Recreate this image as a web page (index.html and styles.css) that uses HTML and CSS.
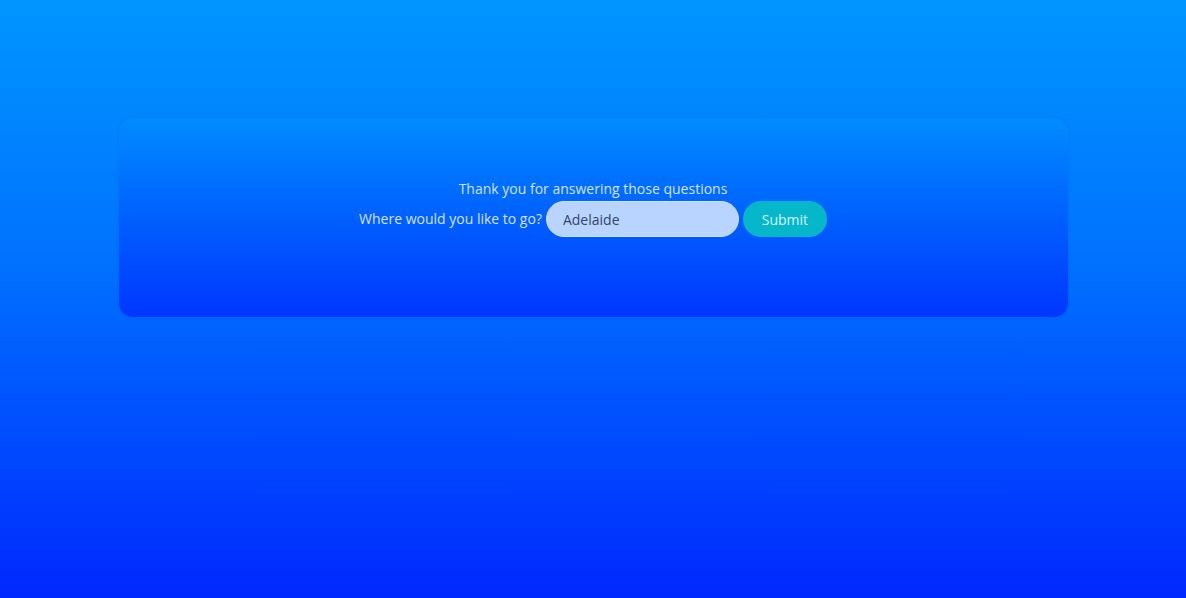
FILE: index.html
```html
<!DOCTYPE html>
<html lang="en">
<head>
<meta charset="utf-8">
<title>Travel</title>
<link rel="stylesheet" href="styles.css">
</head>
<body>
<main class="page">
  <section class="card">
    <p class="thanks">Thank you for answering those questions</p>
    <form class="ask">
      <label class="ask-label" for="dest">Where would you like to go?</label>
      <input class="ask-input" id="dest" type="text" value="Adelaide">
      <button class="ask-btn" type="button">Submit</button>
    </form>
  </section>
</main>
</body>
</html>
```

FILE: styles.css
```css
html, body {
  margin: 0;
  padding: 0;
  height: 100%;
}
body {
  background: linear-gradient(to bottom, #0096ff 0%, #0070ff 45%, #0028ff 100%);
  font-family: "Open Sans", "Noto Sans", sans-serif;
  color: #d2e2ff;
  font-size: 14px;
}
.page {
  display: flex;
  justify-content: center;
  padding-top: 118px;
}
.card {
  width: 949px;
  height: 199px;
  box-sizing: border-box;
  border-radius: 14px;
  background: linear-gradient(to bottom, #008cff 0%, #0060ff 50%, #0036ff 100%);
  box-shadow: 0 0 3px rgba(0, 40, 180, 0.15);
  display: flex;
  flex-direction: column;
  align-items: center;
  padding-top: 61px;
}
.thanks {
  margin: 0 0 2px 0;
  line-height: 20px;
}
.ask {
  display: flex;
  align-items: center;
  gap: 4px;
}
.ask-label {
  line-height: 20px;
}
.ask-input {
  width: 193px;
  height: 36px;
  box-sizing: border-box;
  border: 1px solid #cfe0ff;
  border-radius: 18px;
  background: #b9d4ff;
  color: #34466a;
  font-family: inherit;
  font-size: 14px;
  padding: 0 16px;
  outline: none;
}
.ask-btn {
  width: 84px;
  height: 36px;
  border: none;
  border-radius: 18px;
  background: #06b7c9;
  color: #d6f4ff;
  font-family: inherit;
  font-size: 14px;
  cursor: pointer;
}
```
